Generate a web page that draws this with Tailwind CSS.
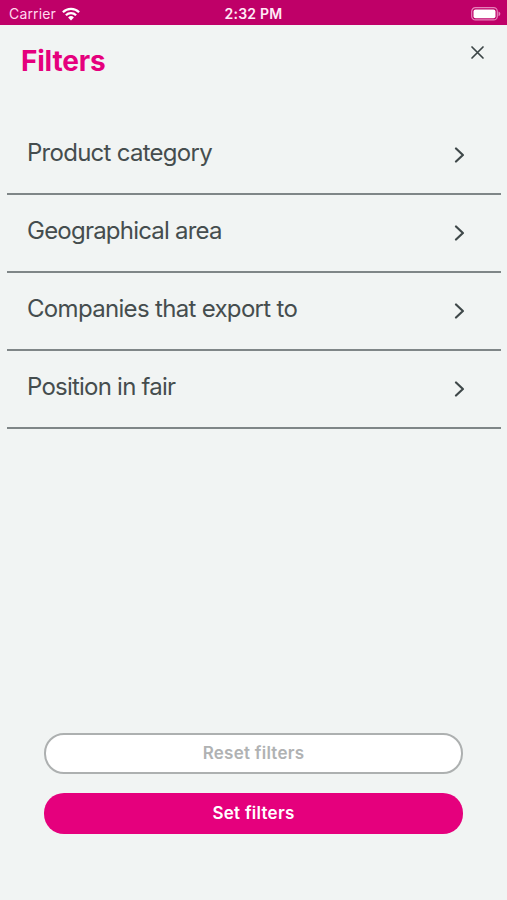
<!DOCTYPE html>
<html lang="en">
<head>
<meta charset="utf-8">
<title>Filters</title>
<script src="https://cdn.jsdelivr.net/npm/@tailwindcss/browser@4"></script>
</head>
<body class="bg-[#f1f4f3]">
<div class="flex h-[900px] w-[507px] flex-col overflow-hidden bg-[#f1f4f3] font-['Inter','Liberation_Sans',sans-serif] text-[#454d4e]">
  <header class="grid h-[25px] shrink-0 grid-cols-[1fr_100px_1fr] items-center bg-[#bf0068] pt-[2px] text-white">
    <div class="flex items-center gap-[6px] pl-[9px] text-[14px] leading-[20px] tracking-[0.15px] text-[#ffd9ee]">
      <span>Carrier</span>
      <svg class="h-[14px] w-[18px]" viewBox="0 0 18 14" fill="none" stroke="#fff" stroke-width="2.3"><path d="M.9 5.2a11.6 11.6 0 0 1 16.2 0M3.9 8.3a7.3 7.3 0 0 1 10.2 0"/><path d="M9 13.4 6.1 10.5a4.1 4.1 0 0 1 5.8 0z" fill="#fff" stroke="none"/></svg>
    </div>
    <div class="text-center text-[14px] leading-[20px] font-semibold tracking-[0.25px] text-[#ffeaf6]">2:32 PM</div>
    <svg class="mr-[6px] h-[14px] w-[30px] justify-self-end" viewBox="0 0 30 14"><rect x=".7" y=".7" width="25.6" height="12.2" rx="3.7" fill="none" stroke="#e583ba" stroke-width="1.2"/><rect x="2.5" y="2.4" width="22" height="8.8" rx="2" fill="#fff"/><path d="M27.5 4.6c2.4.8 2.4 3.8 0 4.6z" fill="#e583ba"/></svg>
  </header>
  <div class="flex h-[92px] shrink-0 items-start justify-between pt-[17px] pr-[22px] pl-[21px]">
    <h1 class="text-[28px] leading-[38px] font-bold tracking-[-0.2px] text-[#e5007d]">Filters</h1>
    <button aria-label="Close" class="mt-[3px]"><svg class="size-[15px]" viewBox="0 0 15 15" fill="none" stroke="#3c4546" stroke-width="1.7" stroke-linecap="round"><path d="M2 2l11 11M13 2L2 13"/></svg></button>
  </div>
  <ul class="mr-[6px] ml-[7px] text-[24px] leading-[32px]">
    <li class="flex h-[78px] items-center justify-between border-b-2 border-[#7f8687] pr-[36px] pb-[4px] pl-[20px]"><span class="tracking-[-0.73px]">Product category</span><svg class="mt-[4px] h-[16px] w-[11px]" viewBox="0 0 11 16" fill="none" stroke="#3f4849" stroke-width="2.2" stroke-linecap="round" stroke-linejoin="round"><path d="M2 1.5 8.9 8 2 14.5"/></svg></li>
    <li class="flex h-[78px] items-center justify-between border-b-2 border-[#7f8687] pr-[36px] pb-[4px] pl-[20px]"><span class="tracking-[-0.78px]">Geographical area</span><svg class="mt-[4px] h-[16px] w-[11px]" viewBox="0 0 11 16" fill="none" stroke="#3f4849" stroke-width="2.2" stroke-linecap="round" stroke-linejoin="round"><path d="M2 1.5 8.9 8 2 14.5"/></svg></li>
    <li class="flex h-[78px] items-center justify-between border-b-2 border-[#7f8687] pr-[36px] pb-[4px] pl-[20px]"><span class="tracking-[-0.68px]">Companies that export to</span><svg class="mt-[4px] h-[16px] w-[11px]" viewBox="0 0 11 16" fill="none" stroke="#3f4849" stroke-width="2.2" stroke-linecap="round" stroke-linejoin="round"><path d="M2 1.5 8.9 8 2 14.5"/></svg></li>
    <li class="flex h-[78px] items-center justify-between border-b-2 border-[#7f8687] pr-[36px] pb-[4px] pl-[20px]"><span class="tracking-[-0.77px]">Position in fair</span><svg class="mt-[4px] h-[16px] w-[11px]" viewBox="0 0 11 16" fill="none" stroke="#3f4849" stroke-width="2.2" stroke-linecap="round" stroke-linejoin="round"><path d="M2 1.5 8.9 8 2 14.5"/></svg></li>
  </ul>
  <div class="mt-auto mr-[44px] mb-[66px] ml-[44px] flex flex-col gap-[19px] text-[17px] font-semibold tracking-[0.25px]">
    <button class="h-[41px] rounded-[20px] border-2 border-[#adb0b0] bg-white text-[#b0b2b3]">Reset filters</button>
    <button class="h-[41px] rounded-[20px] bg-[#e5007d] text-white">Set filters</button>
  </div>
</div>
</body>
</html>
